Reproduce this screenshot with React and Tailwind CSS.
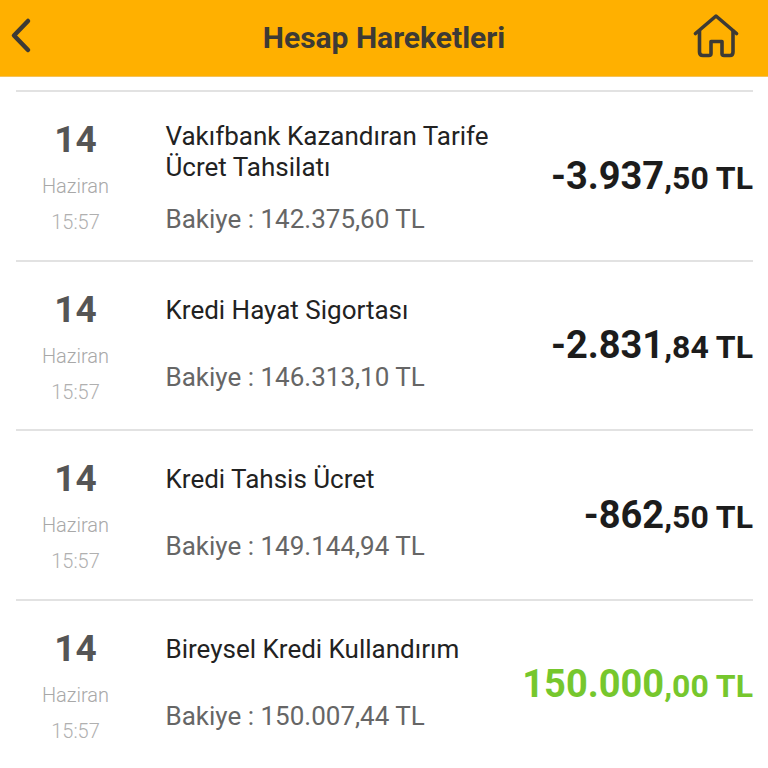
// Hesap Hareketleri - account transactions list
import React from 'react';

const transactions = [
  { day: '14', month: 'Haziran', time: '15:57', title: ['Vakıfbank Kazandıran Tarife', 'Ücret Tahsilatı'], balance: '142.375,60 TL', whole: '-3.937', cents: ',50 TL' },
  { day: '14', month: 'Haziran', time: '15:57', title: ['Kredi Hayat Sigortası'], balance: '146.313,10 TL', whole: '-2.831', cents: ',84 TL' },
  { day: '14', month: 'Haziran', time: '15:57', title: ['Kredi Tahsis Ücret'], balance: '149.144,94 TL', whole: '-862', cents: ',50 TL' },
  { day: '14', month: 'Haziran', time: '15:57', title: ['Bireysel Kredi Kullandırım'], balance: '150.007,44 TL', whole: '150.000', cents: ',00 TL', income: true },
];

function BackIcon() {
  return (
    <svg width="40" height="48" viewBox="0 0 40 48" fill="none" stroke="#3d3a35" strokeWidth="4.5" strokeLinecap="round" strokeLinejoin="round">
      <path d="M19 7 L5 21.5 L19 36" />
    </svg>
  );
}

function HomeIcon() {
  return (
    <svg width="48" height="48" viewBox="0 0 48 48" fill="none" stroke="#3d3a35" strokeWidth="3.6" strokeLinecap="round" strokeLinejoin="round">
      <path d="M3.5 19.5 L24 2 L44.5 19.5" />
      <path d="M7.5 17 V38 Q7.5 41.5 11 41.5 H17 Q19 41.5 19 39.5 V27.5 H30 V39.5 Q30 41.5 32 41.5 H38 Q41 41.5 41 38 V17" />
    </svg>
  );
}

function Row({ t }) {
  const twoLines = t.title.length > 1;
  return (
    <div className="flex h-[169.5px] border-t-2 border-[#e2e2e2]">
      <div className="w-[119px] flex flex-col items-center pt-[25px]">
        <div className="text-[37px] leading-[46px] font-bold text-[#555555]">{t.day}</div>
        <div className="text-[20px] leading-[24px] mt-[11px] font-light text-[#a8a8a8]">{t.month}</div>
        <div className="text-[20px] leading-[24px] mt-[12px] font-light text-[#b0b0b0]">{t.time}</div>
      </div>
      <div className="w-[30.5px]" />
      <div className={`flex-1 text-[26px] leading-[31px] ${twoLines ? 'pt-[29px]' : 'pt-[33px]'}`}>
        <div className="text-[#222222]">
          {t.title.map((line) => <div key={line}>{line}</div>)}
        </div>
        <div className={`text-[#666666] ${twoLines ? 'mt-[21px]' : 'mt-[36px]'}`}>Bakiye : {t.balance}</div>
      </div>
      <div className={`self-center font-bold whitespace-nowrap mt-[2px] ${t.income ? 'text-[#76c72d]' : 'text-[#1c1c1c]'}`}>
        <span className="text-[38px] leading-[46px]">{t.whole}</span>
        <span className="text-[32px] leading-[46px]">{t.cents}</span>
      </div>
    </div>
  );
}

export default function App() {
  return (
    <div className="w-[768px] h-[768px] overflow-hidden bg-white font-['Roboto',sans-serif]">
      <div className="h-[77px] bg-[#ffb000] flex items-center justify-between pl-[9px] pr-[28px] border-b border-[#f5c25a]">
        <div className="w-[67px]">
          <BackIcon />
        </div>
        <h1 className="text-[30px] font-bold text-[#3d3a35] mb-[2px]">Hesap Hareketleri</h1>
        <HomeIcon />
      </div>
      <div className="pt-[13px] pl-[16px] w-[753px]">
        {transactions.map((t) => <Row key={t.balance} t={t} />)}
      </div>
    </div>
  );
}
